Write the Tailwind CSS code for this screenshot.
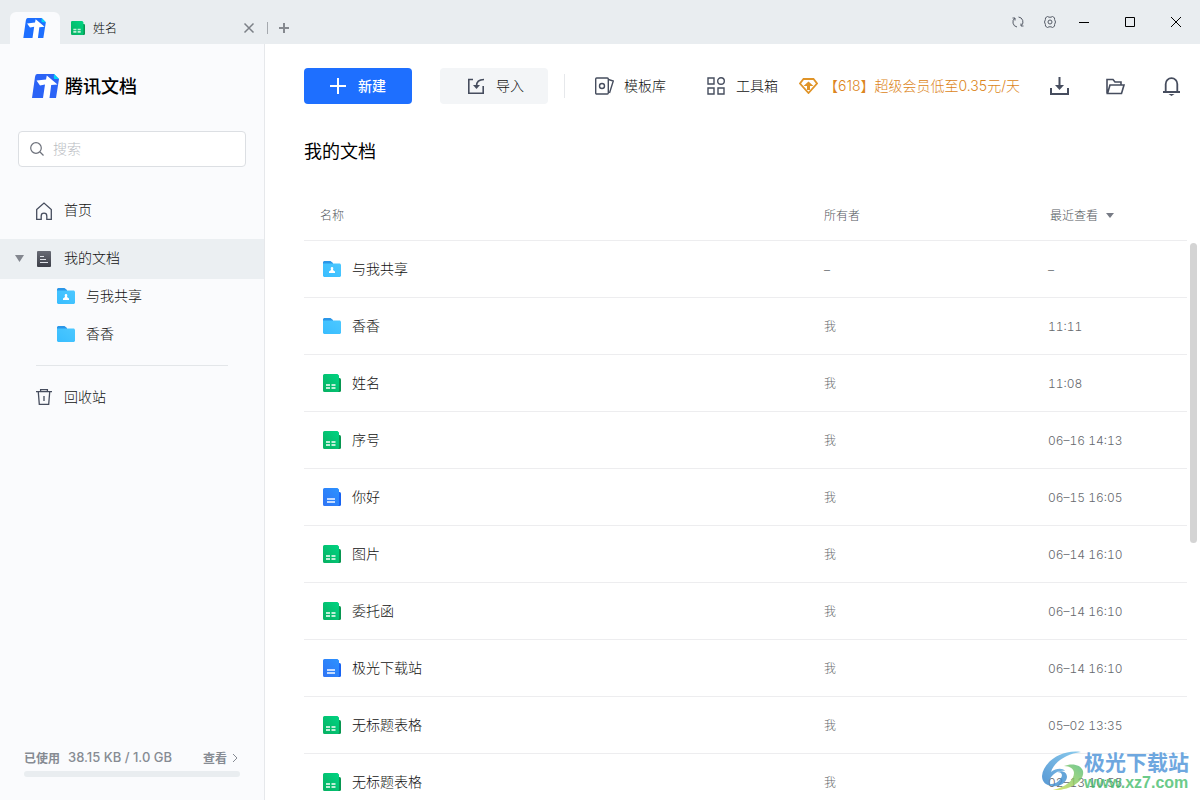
<!DOCTYPE html>
<html lang="zh-CN">
<head>
<meta charset="utf-8">
<meta name="viewport" content="width=device-width, initial-scale=1">
<title>腾讯文档</title>
<script src="https://cdn.jsdelivr.net/npm/@tailwindcss/browser@4"></script>
</head>
<body class="h-screen overflow-hidden flex flex-col bg-white text-sm text-[#3c3f45] font-['Noto_Sans_CJK_SC',sans-serif]">

<svg class="absolute w-0 h-0" aria-hidden="true">
  <defs>
    <linearGradient id="g-green" x1="1" y1="0" x2="0" y2="1"><stop offset="0" stop-color="#00d482"/><stop offset="1" stop-color="#07b062"/></linearGradient>
    <linearGradient id="g-blue" x1="1" y1="0" x2="0" y2="1"><stop offset="0" stop-color="#2b92ff"/><stop offset="1" stop-color="#2f74f5"/></linearGradient>
    <linearGradient id="g-folder" x1="0" y1="1" x2="1" y2="0"><stop offset="0" stop-color="#38bdff"/><stop offset="1" stop-color="#4cc8ff"/></linearGradient>
    <linearGradient id="g-dark" x1="0" y1="0" x2="0" y2="1"><stop offset="0" stop-color="#686b75"/><stop offset="1" stop-color="#3c3e47"/></linearGradient>
    <linearGradient id="g-swirl" x1="0" y1="1" x2="1" y2="0"><stop offset="0" stop-color="#2f7fca"/><stop offset="1" stop-color="#6fc0ea"/></linearGradient>
    <linearGradient id="g-leaf" x1="0" y1="1" x2="1" y2="0"><stop offset="0" stop-color="#d3e04a"/><stop offset="1" stop-color="#4dba78"/></linearGradient>
  </defs>
  <symbol id="logo" viewBox="0 0 28 24">
    <path d="M5 0h17l5 5-3 19H0L3 3Q3.400 0 5 0Z" fill="currentColor"/>
    <path d="M22 0l5 5h-4q-1.500 0-1.200-1.500Z" fill="#00d5f5"/>
    <path d="M14.800 1.500 25.500 10.500 19.200 11 17.500 24H11L13 10.500 8 11.500 4.500 6.500 14 5.500Z" fill="#fff"/>
  </symbol>
  <symbol id="sheet" viewBox="0 0 18 18">
    <path d="M12 4h4.500A1.500 1.500 0 0 1 18 5.500v11a1.500 1.500 0 0 1-1.500 1.500H12Z" fill="#089651"/>
    <path d="M1.500 0h13L16 1.500V17l-1 1H1.500A1.500 1.500 0 0 1 0 16.500v-15A1.500 1.500 0 0 1 1.500 0Z" fill="url(#g-green)"/>
    <path d="M3 10h4v2H3zM8.500 10h4v2h-4zM3 13h4v2H3zM8.500 13h4v2h-4z" fill="#bff0d8"/>
  </symbol>
  <symbol id="doc" viewBox="0 0 18 18">
    <path d="M12 4h4.500A1.500 1.500 0 0 1 18 5.500v11a1.500 1.500 0 0 1-1.500 1.500H12Z" fill="#1763f2"/>
    <path d="M1.500 0h13L16 1.500V17l-1 1H1.500A1.500 1.500 0 0 1 0 16.500v-15A1.500 1.500 0 0 1 1.500 0Z" fill="url(#g-blue)"/>
    <path d="M4 10h8v2H4zM4 13h8v2H4z" fill="#c4dcff"/>
  </symbol>
  <symbol id="folder" viewBox="0 0 18 16">
    <path d="M1 0h6.500L10 2v3H0V1Z" fill="#2a96e8"/>
    <path d="M0 2.500h17L18 3.500V15l-1 1H1l-1-1Z" fill="url(#g-folder)"/>
  </symbol>
  <symbol id="shared" viewBox="0 0 18 16">
    <path d="M1 0h6.500L10 2v3H0V1Z" fill="#2a96e8"/>
    <path d="M0 2.500h17L18 3.500V15l-1 1H1l-1-1Z" fill="url(#g-folder)"/>
    <path d="M7.700 7.300a1.300 1.300 0 1 1 2.600 0c0 .8-.3 1.200-.3 1.700L12 10.500V12H6v-1.500L8 9c0-.5-.3-.9-.3-1.700Z" fill="#fff"/>
  </symbol>
</svg>

<header class="h-11 shrink-0 flex bg-[#e9edf0] text-xs">
  <div class="mt-3 ml-[10px] w-[50px] flex items-center justify-center rounded-t-md bg-[#fafbfd] text-[#1e6fff]">
    <svg class="w-6 h-5" aria-hidden="true"><use href="#logo"/></svg>
  </div>
  <div class="mt-3 pl-[11px] w-[205px] flex items-center gap-2 font-light text-black">
    <svg class="w-[14px] h-[14px]" aria-hidden="true"><use href="#sheet"/></svg>
    <span class="pb-px">姓名</span>
    <button class="ml-auto mr-[10px]" aria-label="关闭标签页"><svg class="w-3 h-3 fill-none stroke-[#7c8087]" viewBox="0 0 12 12" stroke-width="1.500"><path d="M1.500 1.500l9 9M10.500 1.500l-9 9"/></svg></button>
  </div>
  <div class="mt-3 flex items-center gap-[10px]">
    <span class="ml-[2px] w-px h-3 bg-[#a5a9ae]"></span>
    <button aria-label="新建标签页"><svg class="w-3 h-3 fill-none stroke-[#85898f]" viewBox="0 0 12 12" stroke-width="2"><path d="M6 1v10M1 6h10"/></svg></button>
  </div>
  <div class="ml-auto flex items-center pr-[18px] text-black">
    <button class="mr-5" aria-label="刷新"><svg class="w-3 h-3 fill-none stroke-[#555b66]" viewBox="0 0 12 12"><path d="M.5 2H3v2.500M3 2A5 5 0 0 0 5 11M6.500 1A5 5 0 0 1 9.500 9.500M11.500 10H9V7.500"/></svg></button>
    <button class="mr-[23px]" aria-label="设置"><svg class="w-3 h-3 fill-none stroke-[#555b66]" viewBox="0 0 12 12"><path d="M3.500.5 5 1.200h2L8.500.5l2 1.300.1 1.700L11.500 6l-.9 2.500-.1 1.700-2 1.300L7 10.800H5l-1.500.7-2-1.300-.1-1.700L.5 6l.9-2.500.1-1.700Z"/><circle cx="6" cy="6" r="2"/></svg></button>
    <button class="mr-[35px]" aria-label="最小化"><svg class="w-[10px] h-3 fill-none stroke-current" viewBox="0 0 10 12"><path d="M0 6.500h10"/></svg></button>
    <button class="mr-[34px]" aria-label="最大化"><svg class="w-[12px] h-3 fill-none stroke-current" viewBox="0 0 12 12"><path d="M1.500 1.500h9v9h-9Z"/></svg></button>
    <button aria-label="关闭"><svg class="w-[12px] h-3 fill-none stroke-current" viewBox="0 0 12 12"><path d="M1 1l10 10M11 1 1 11"/></svg></button>
  </div>
</header>

<div class="flex-1 min-h-0 flex">
  <aside class="w-[265px] shrink-0 flex flex-col bg-[#fafbfd] border-r border-[#e6e8eb]">
    <div class="mt-7 ml-8 h-7 flex items-center gap-[5px] text-[#2b63f6]">
      <svg class="w-[28px] h-6" aria-hidden="true"><use href="#logo"/></svg>
      <span class="pb-[2px] text-lg font-medium text-black">腾讯文档</span>
    </div>
    <label class="mt-[31px] mx-[18px] h-9 flex items-center gap-[9px] px-[11px] pb-px rounded border border-[#dcdfe3] bg-white">
      <svg class="w-[14px] h-[14px] shrink-0 fill-none stroke-[#6d717b]" viewBox="0 0 14 14" stroke-width="1.200"><circle cx="6" cy="6" r="5.300"/><path d="M10 10l3.500 3.500"/></svg>
      <input type="search" aria-label="搜索" placeholder="搜索" class="min-w-0 flex-1 pb-[2px] outline-none font-light placeholder:text-[#b9bcc2]">
    </label>
    <nav class="mt-6 font-light text-[#111] [&_span]:pb-[3px]">
      <a href="#" class="h-10 flex items-center gap-3 pl-9 pb-px">
        <svg class="w-4 h-[18px] fill-none stroke-[#464d5e]" viewBox="0 0 16 18" stroke-width="1.300"><path d="M.7 7.500 8 1l7.300 6.500v9.800h-4.500V14a2.800 2.800 0 0 0-5.600 0v3.300H.7Z"/></svg><span>首页</span></a>
      <a href="#" aria-current="page" class="mt-2 h-10 flex items-center pl-[15px] pb-px bg-[#ebeff2]">
        <svg class="w-[9px] h-[7px] mr-[13px] fill-[#83878f]" viewBox="0 0 9 7"><path d="M0 0h9L4.500 7Z"/></svg>
        <svg class="w-[14px] h-4 mr-[13px]" viewBox="0 0 14 16"><rect width="14" height="16" rx="1" fill="url(#g-dark)"/><path d="M3 5.500h4M3 8.500h6M3 11.500h8" stroke="#dfe2e8"/></svg><span>我的文档</span></a>
      <a href="#" class="h-[38px] flex items-center gap-[11px] pl-[57px] -mt-[2px]"><svg class="w-[18px] h-4" aria-hidden="true"><use href="#shared"/></svg><span>与我共享</span></a>
      <a href="#" class="h-[38px] flex items-center gap-[11px] pl-[57px]"><svg class="w-[18px] h-4" aria-hidden="true"><use href="#folder"/></svg><span>香香</span></a>
      <div class="mt-3 mx-9 h-px bg-[#e3e6e9]"></div>
      <a href="#" class="mt-[11px] h-10 flex items-center gap-3 pl-9">
        <svg class="w-4 h-4 fill-none stroke-[#464d5e]" viewBox="0 0 16 16" stroke-width="1.300"><path d="M0 2.700h16M4.600 2.500V.7h6.800v1.800M2.300 3l1 12.300h9.400l1-12.300M8 7v5"/></svg><span>回收站</span></a>
    </nav>
    <footer class="mt-auto mx-6 mb-[23px] text-xs font-bold text-[#868b93]">
      <div class="mb-[3px] flex items-center gap-2 h-5">
        <label for="quota">已使用</label>
        <span class="text-[13px] font-medium font-['Inter','Noto_Sans_CJK_SC',sans-serif]">38.15 KB / 1.0 GB</span>
        <a href="#" class="ml-auto mr-[2px] flex items-center gap-1">查看<svg class="w-[7px] h-2 fill-none stroke-current" viewBox="0 0 7 8"><path d="M2 0l4 4-4 4"/></svg></a>
      </div>
      <progress id="quota" value="0" max="100" class="block w-full h-[6px] appearance-none rounded-sm overflow-hidden bg-[#e9edf0] [&::-webkit-progress-bar]:bg-[#e9edf0]"></progress>
    </footer>
  </aside>

  <main class="flex-1 min-w-0 flex flex-col">
    <div class="mt-6 pl-[39px] pr-5 h-9 flex items-center whitespace-nowrap [&_button_span]:pb-[2px]">
      <button class="w-[108px] h-9 flex items-center justify-center gap-3 rounded bg-[#1e6fff] font-medium text-white"><svg class="w-4 h-4 stroke-current" viewBox="0 0 16 16" stroke-width="2"><path d="M8 0v16M0 8h16"/></svg><span>新建</span></button>
      <button class="ml-7 w-[108px] h-9 flex items-center justify-center gap-3 pl-1 rounded bg-[#f3f5f7] font-light text-[#111]"><svg class="w-4 h-4 fill-none stroke-[#464d5e]" viewBox="0 0 16 16" stroke-width="1.600"><path d="M5 1.500H.8v13.700h14.400V8"/><path d="M16 1.500C11 1.500 8.500 4 8.500 8"/><path d="M5 7h7l-3.500 4Z" fill="#464d5e" stroke="none"/></svg><span>导入</span></button>
      <div class="ml-4 w-px h-6 bg-[#e6e8eb]"></div>
      <button class="ml-[30px] flex items-center gap-[10px] font-light text-[#111]"><svg class="w-[19px] h-[18px] fill-none stroke-[#464d5e]" viewBox="0 0 19 18" stroke-width="1.400"><rect x=".7" y="1" width="12.600" height="16" rx="1"/><circle cx="7" cy="9" r="2.500"/><path d="M13.500 2.500 18.300 4l-3.800 12"/></svg><span>模板库</span></button>
      <button class="ml-[41px] flex items-center gap-[11px] font-light text-[#111]"><svg class="w-[18px] h-[18px] fill-none stroke-[#464d5e]" viewBox="0 0 18 18" stroke-width="1.400"><path d="M1 1h6v6H1zM1 11h6v6H1zM11 11h6v6h-6z"/><circle cx="14" cy="4" r="3.300"/></svg><span>工具箱</span></button>
      <a href="#" class="ml-[21px] flex items-center gap-[6px] font-light text-[#dc8520]"><svg class="w-[19px] h-4 fill-none stroke-[#e09428]" viewBox="0 0 19 16" stroke-width="1.800"><path d="M4.500 1h10L18 5.500 9.500 15 1 5.500Z"/><path d="M9.500 3.500l5 4.500h-3.500v4H8V8H4.500Z" fill="#e09428" stroke="none"/></svg><span class="font-['Inter','Noto_Sans_CJK_SC',sans-serif]">【618】超级会员低至0.35元/天</span></a>
      <div class="ml-auto flex items-center text-[#464d5e]">
        <button class="mr-[37px]" aria-label="下载"><svg class="w-[19px] h-[18px] fill-none stroke-current" viewBox="0 0 19 18" stroke-width="2"><path d="M1 11v6h17v-6M9.500 0v10"/><path d="M5 8h9l-4.500 5Z" fill="currentColor" stroke="none"/></svg></button>
        <button class="mr-[38px]" aria-label="打开文件夹"><svg class="w-[19px] h-[17px] fill-none stroke-current" viewBox="0 0 19 17" stroke-width="1.600"><path d="M1 15.500V1.500h6l2 2.500h6v3M1.500 15.500 4 7h14l-2.500 8.500Z"/></svg></button>
        <button aria-label="通知"><svg class="w-[17px] h-[20px] fill-none stroke-current" viewBox="0 0 17 20" stroke-width="1.800"><path d="M2.700 16V8a5.800 5.800 0 0 1 11.600 0v8M0 16h17"/><path d="M5.500 18h6L8.500 20Z" fill="currentColor" stroke="none"/></svg></button>
      </div>
    </div>

    <h1 class="mt-8 pl-[39px] h-7 flex items-center text-lg text-black">我的文档</h1>

    <div class="mt-[26px] flex-1 min-h-0 flex pl-[39px] pr-[3px] overflow-hidden">
      <div class="flex-1 min-w-0 overflow-hidden">
        <table class="w-full table-fixed border-collapse text-left text-xs font-light [&_tr]:border-b [&_tr]:border-[#ededef] [&_tbody_tr]:h-[57px] [&_td]:p-0 [&_td]:pt-[2px] [&_th]:p-0 [&_th]:pt-px [&_th]:font-light [&_th]:text-[#555960] [&_td]:text-[#66696e] [&_a]:pb-px">
          <colgroup><col><col class="w-[224px]"><col class="w-[139px]"></colgroup>
          <thead>
            <tr class="h-[50px]"><th><span class="pl-4">名称</span></th><th>所有者</th><th><button class="flex items-center gap-2 pl-[2px]">最近查看<svg class="w-2 h-[5px] fill-[#777b85]" viewBox="0 0 8 5"><path d="M0 0h8L4 5Z"/></svg></button></th></tr>
          </thead>
          <tbody class="tabular-nums font-['Inter','Noto_Sans_CJK_SC',sans-serif]">
            <tr><td><a href="#" class="flex items-center gap-[11px] pl-[19px] text-sm text-[#111]"><svg class="w-[18px] h-4" aria-hidden="true"><use href="#shared"/></svg>与我共享</a></td><td>–</td><td>–</td></tr>
            <tr><td><a href="#" class="flex items-center gap-[11px] pl-[19px] text-sm text-[#111]"><svg class="w-[18px] h-4" aria-hidden="true"><use href="#folder"/></svg>香香</a></td><td>我</td><td>11:11</td></tr>
            <tr><td><a href="#" class="flex items-center gap-[11px] pl-[19px] text-sm text-[#111]"><svg class="w-[18px] h-[18px]" aria-hidden="true"><use href="#sheet"/></svg>姓名</a></td><td>我</td><td>11:08</td></tr>
            <tr><td><a href="#" class="flex items-center gap-[11px] pl-[19px] text-sm text-[#111]"><svg class="w-[18px] h-[18px]" aria-hidden="true"><use href="#sheet"/></svg>序号</a></td><td>我</td><td>06–16 14:13</td></tr>
            <tr><td><a href="#" class="flex items-center gap-[11px] pl-[19px] text-sm text-[#111]"><svg class="w-[18px] h-[18px]" aria-hidden="true"><use href="#doc"/></svg>你好</a></td><td>我</td><td>06–15 16:05</td></tr>
            <tr><td><a href="#" class="flex items-center gap-[11px] pl-[19px] text-sm text-[#111]"><svg class="w-[18px] h-[18px]" aria-hidden="true"><use href="#sheet"/></svg>图片</a></td><td>我</td><td>06–14 16:10</td></tr>
            <tr><td><a href="#" class="flex items-center gap-[11px] pl-[19px] text-sm text-[#111]"><svg class="w-[18px] h-[18px]" aria-hidden="true"><use href="#sheet"/></svg>委托函</a></td><td>我</td><td>06–14 16:10</td></tr>
            <tr><td><a href="#" class="flex items-center gap-[11px] pl-[19px] text-sm text-[#111]"><svg class="w-[18px] h-[18px]" aria-hidden="true"><use href="#doc"/></svg>极光下载站</a></td><td>我</td><td>06–14 16:10</td></tr>
            <tr><td><a href="#" class="flex items-center gap-[11px] pl-[19px] text-sm text-[#111]"><svg class="w-[18px] h-[18px]" aria-hidden="true"><use href="#sheet"/></svg>无标题表格</a></td><td>我</td><td>05–02 13:35</td></tr>
            <tr><td><a href="#" class="flex items-center gap-[11px] pl-[19px] text-sm text-[#111]"><svg class="w-[18px] h-[18px]" aria-hidden="true"><use href="#sheet"/></svg>无标题表格</a></td><td>我</td><td>02–13 10:55</td></tr>
          </tbody>
        </table>
      </div>
      <div class="ml-[3px] mt-[53px] w-[7px] h-[300px] shrink-0 rounded-full bg-[#d4d4d4]"></div>
    </div>
  </main>
</div>

<div class="absolute right-[11px] bottom-[7px] flex items-center pointer-events-none opacity-80">
  <svg class="w-[44px] h-[42px]" viewBox="0 0 44 42" aria-hidden="true">
    <path d="M39 2C20-1 1 12 0 26c0 6 4 9 9 10-3-4-1-9 3-12 3-3 8-4 11-3-2-3-9-3-14 1C12 12 24 4 39 2Z" fill="url(#g-swirl)"/>
    <path d="M22 16c7-3 17-2 19 5 2 10-13 20-30 19 13-3 21-10 21-17 0-4-4-7-10-7Z" fill="url(#g-leaf)"/>
    <path d="M5 34c8 5 19 1 20-7 0-5-5-7-10-5 5 0 6 3 4 6-3 5-8 7-14 6Z" fill="#3f8fd0"/>
  </svg>
  <div class="-ml-[2px] flex flex-col">
    <span class="text-[21px] leading-6 font-bold text-[#4a92d8]">极光下载站</span>
    <span class="text-base leading-5 font-bold text-[#45bd6c] font-['Liberation_Sans',sans-serif]">www.xz7.com</span>
  </div>
</div>
</body>
</html>
